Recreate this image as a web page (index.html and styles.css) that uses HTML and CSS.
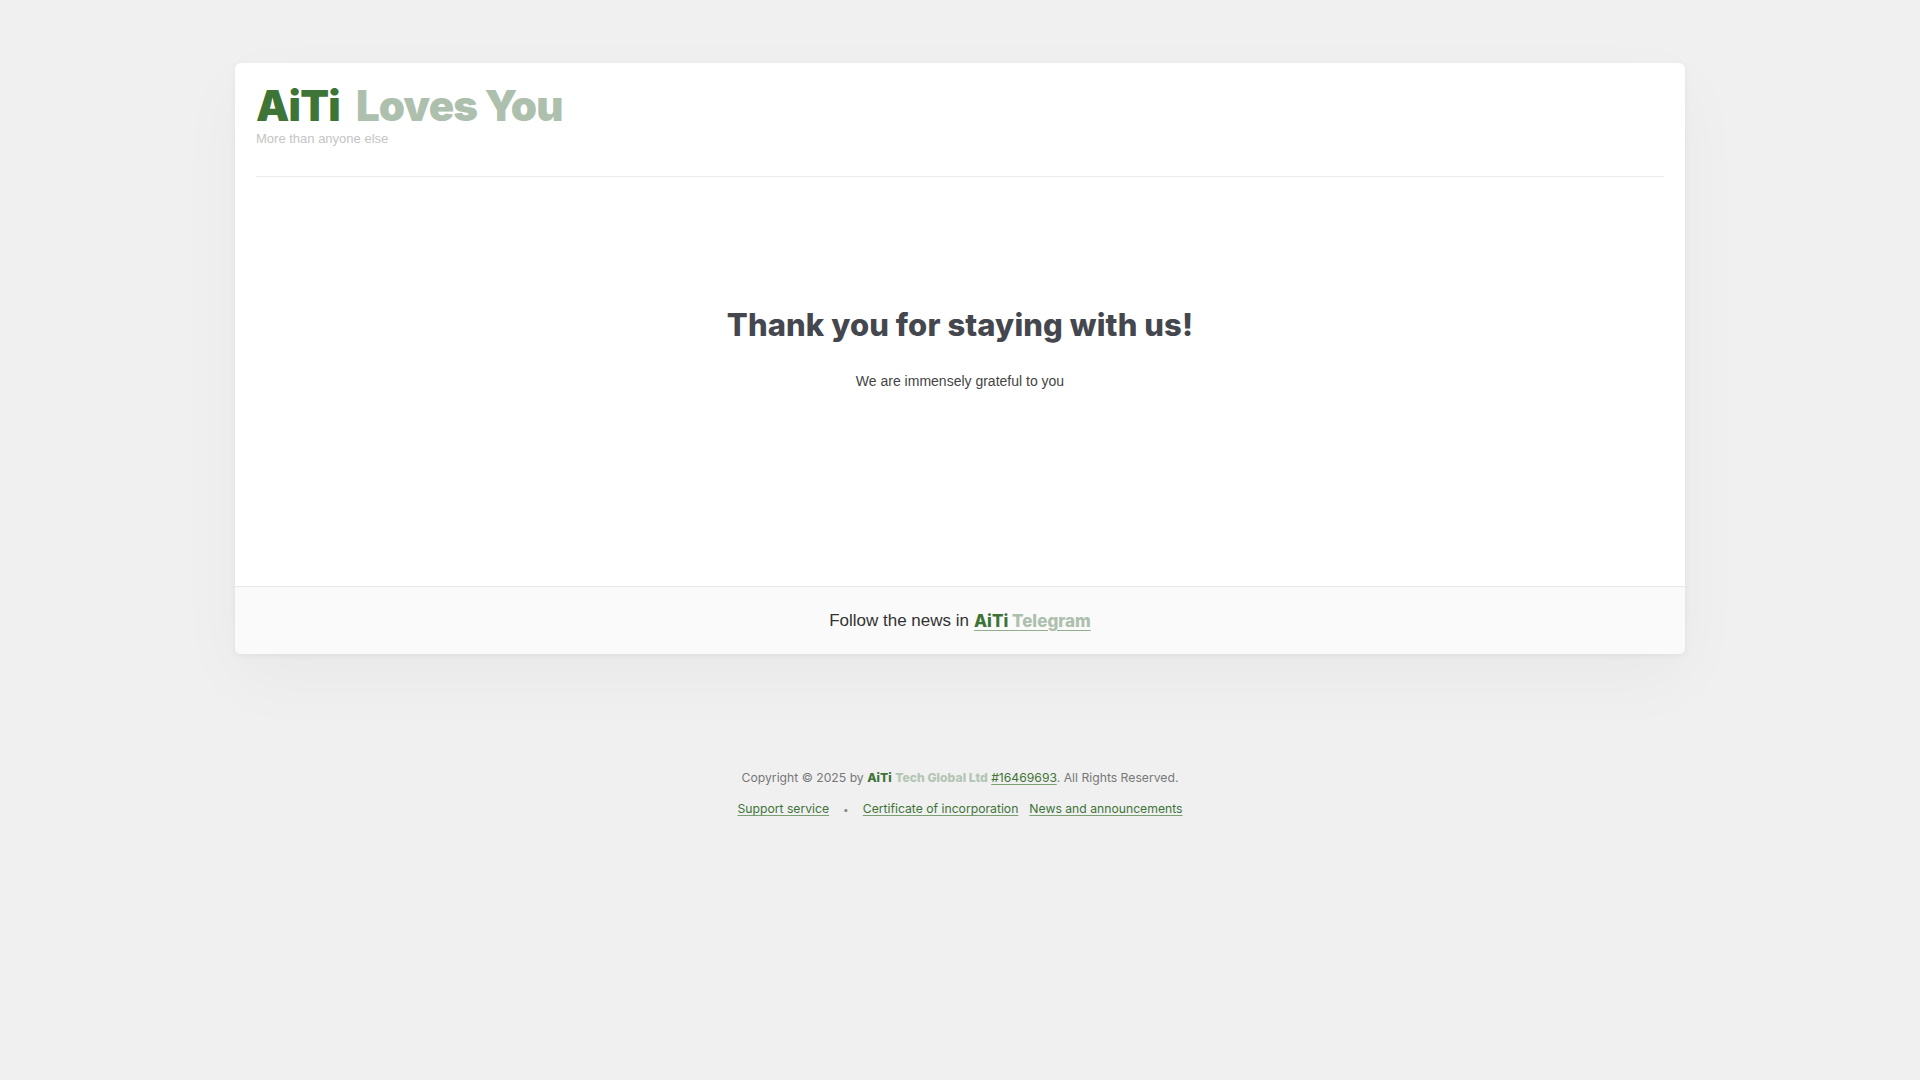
FILE: index.html
```html
<!DOCTYPE html>
<html lang="en">
<head>
<meta charset="utf-8">
<title>AiTi Loves You</title>
<link rel="stylesheet" href="styles.css">
</head>
<body>
<div class="page">
  <div class="card">
    <header class="card-head">
      <h1 class="brand"><span class="brand-a">AiTi</span><span class="brand-b">Loves You</span></h1>
      <div class="tagline">More than anyone else</div>
    </header>
    <main class="card-body">
      <h2 class="thanks">Thank you for staying with us!</h2>
      <p class="grateful">We are immensely grateful to you</p>
    </main>
    <div class="card-foot">
      Follow the news in <a class="tg" href="#"><span class="tg-a">AiTi</span> <span class="tg-b">Telegram</span></a>
    </div>
  </div>
  <footer class="site-foot">
    <div class="copy">Copyright © 2025 by <b class="c-a">AiTi</b> <b class="c-b">Tech Global Ltd</b> <a href="#" class="flink">#16469693</a>. All Rights Reserved.</div>
    <div class="links">
      <a href="#" class="flink">Support service</a>
      <span class="dot">•</span>
      <a href="#" class="flink">Certificate of incorporation</a>
      <a href="#" class="flink">News and announcements</a>
    </div>
  </footer>
</div>
</body>
</html>
```

FILE: styles.css
```css
html, body {
  margin: 0;
  padding: 0;
  background: #f0f0f1;
  font-family: "Liberation Sans", Arial, sans-serif;
}
.page {
  padding-top: 63px;
  display: flex;
  flex-direction: column;
  align-items: center;
}
.card {
  width: 1450px;
  background: #fff;
  border-radius: 6px;
  overflow: hidden;
  box-shadow: 0 2px 6px rgba(0,0,0,0.05), 0 24px 70px rgba(0,0,0,0.035);
}
.card-head {
  margin: 0 21px;
  padding: 22px 0 29px;
  border-bottom: 1px solid #ebebeb;
}
.brand {
  margin: 0;
  font-family: Inter, "Liberation Sans", sans-serif;
  font-size: 42px;
  line-height: 42px;
  font-weight: 900;
  letter-spacing: -0.8px;
  display: flex;
  gap: 16px;
}
.brand-a { color: #3e7436; }
.brand-b { color: #adc0ad; }
.tagline {
  margin-top: 4px;
  font-size: 13px;
  line-height: 16px;
  color: #c4c4c4;
}
.card-body {
  padding: 129px 0 195px;
  text-align: center;
}
.thanks {
  margin: 0;
  font-family: Inter, "Liberation Sans", sans-serif;
  font-size: 31px;
  line-height: 37px;
  font-weight: 800;
  color: #45474f;
  letter-spacing: 0.1px;
}
.grateful {
  margin: 28px 0 0;
  font-size: 14px;
  line-height: 20px;
  color: #444;
}
.card-foot {
  border-top: 1px solid #e8e8e8;
  background: #fafafa;
  height: 67px;
  display: flex;
  align-items: center;
  justify-content: center;
  font-size: 17px;
  color: #333;
  gap: 5px;
}
.tg {
  font-family: Inter, "Liberation Sans", sans-serif;
  font-weight: 800;
  text-decoration: underline;
  text-decoration-color: #8fb08a;
  text-underline-offset: 3px;
}
.tg-a { color: #3e7436; }
.tg-b { color: #adc0ad; }
.site-foot {
  margin-top: 116px;
  text-align: center;
  font-family: Inter, "Liberation Sans", sans-serif;
  font-size: 12.2px;
  color: #777;
}
.copy { line-height: 16px; }
.c-a { color: #3e7436; font-weight: 800; }
.c-b { color: #b3c5b3; font-weight: 800; }
.flink {
  color: #3e7436;
  text-decoration: underline;
  text-underline-offset: 2px;
  text-decoration-color: #7aa072;
}
.links {
  margin-top: 15px;
  line-height: 16px;
  display: flex;
  justify-content: center;
  gap: 11px;
}
.dot { color: #888; font-size: 10px; padding: 0 3px; }
```
